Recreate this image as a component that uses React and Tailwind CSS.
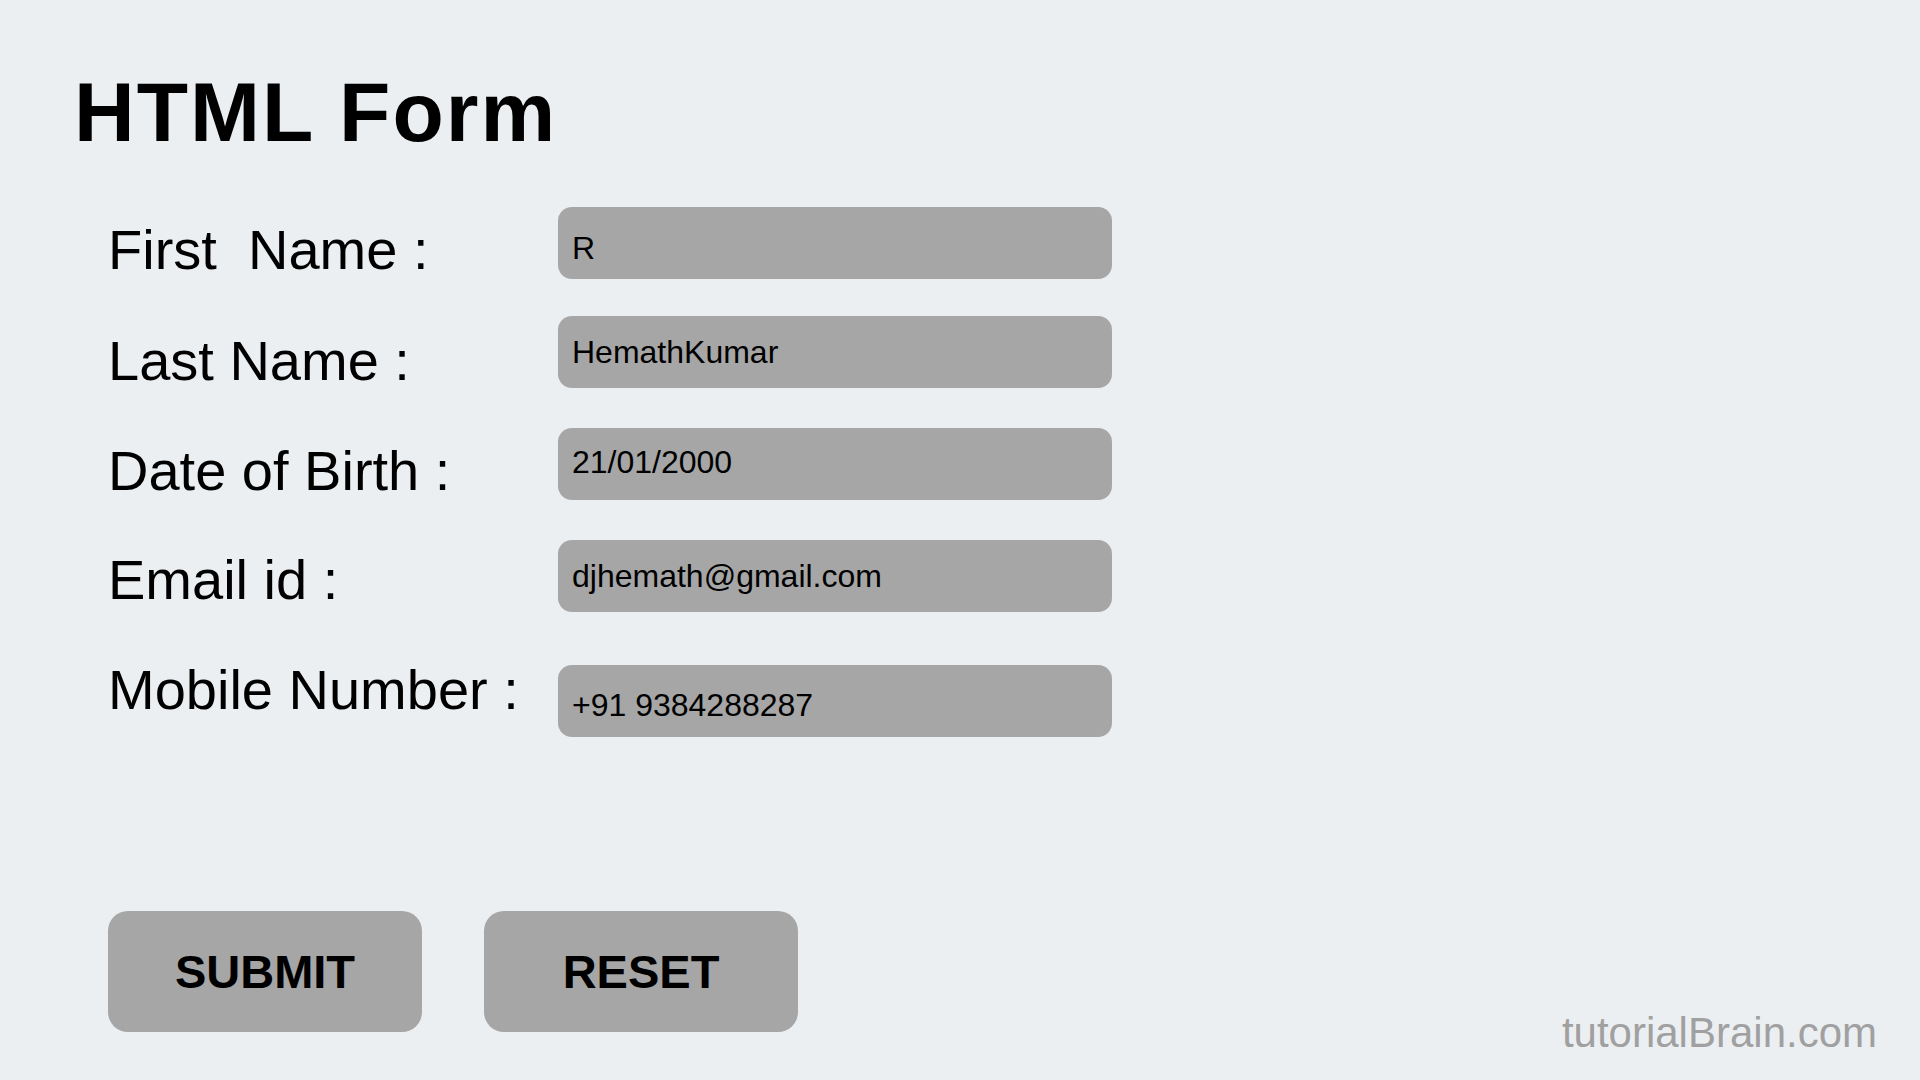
import React from 'react';

const fields = [
  { label: 'First\u00a0 Name :', value: 'R', rowTop: 'mt-0', labelTop: 'mt-[15px]', textPad: 'pt-[10px]' },
  { label: 'Last Name :', value: 'HemathKumar', rowTop: 'mt-[37px]', labelTop: 'mt-[17px]', textPad: 'pt-0' },
  { label: 'Date of Birth :', value: '21/01/2000', rowTop: 'mt-[39px]', labelTop: 'mt-[15px]', textPad: 'pb-[4px]' },
  { label: 'Email id :', value: 'djhemath@gmail.com', rowTop: 'mt-[40px]', labelTop: 'mt-[12px]', textPad: 'pt-0' },
  { label: 'Mobile Number :', value: '+91 9384288287', rowTop: 'mt-[53px]', labelTop: '-mt-[3px]', textPad: 'pt-[8px]' },
];

function App() {
  return (
    <div
      className="relative h-screen w-full overflow-hidden bg-[#ebeff2] text-black"
      style={{ fontFamily: '"Liberation Sans", Arial, sans-serif' }}
    >
      {/* Titulo */}
      <h1 className="pl-[74px] pt-[70px] text-[84px] font-bold leading-none tracking-[2px]">HTML Form</h1>

      {/* Campos */}
      <div className="mt-[53px] flex flex-col pl-[108px]">
        {fields.map((f, i) => (
          <div key={i} className={`flex items-start ${f.rowTop}`}>
            <div className={`w-[450px] text-[56px] leading-none whitespace-nowrap ${f.labelTop}`}>{f.label}</div>
            <div className={`flex h-[72px] w-[554px] items-center rounded-[14px] bg-[#a6a6a6] pl-[14px] text-[32px] leading-none ${f.textPad}`}>
              {f.value}
            </div>
          </div>
        ))}
      </div>

      {/* Botones */}
      <div className="absolute left-[108px] top-[911px] flex gap-[62px]">
        <button className="flex h-[121px] w-[314px] items-center justify-center rounded-[20px] bg-[#a6a6a6] text-[47px] font-bold leading-none">
          SUBMIT
        </button>
        <button className="flex h-[121px] w-[314px] items-center justify-center rounded-[20px] bg-[#a6a6a6] text-[47px] font-bold leading-none">
          RESET
        </button>
      </div>

      {/* Marca de agua */}
      <div className="absolute bottom-[26px] right-[43px] text-[42px] leading-none text-[#a0a0a0]">tutorialBrain.com</div>
    </div>
  );
}

export default App;
